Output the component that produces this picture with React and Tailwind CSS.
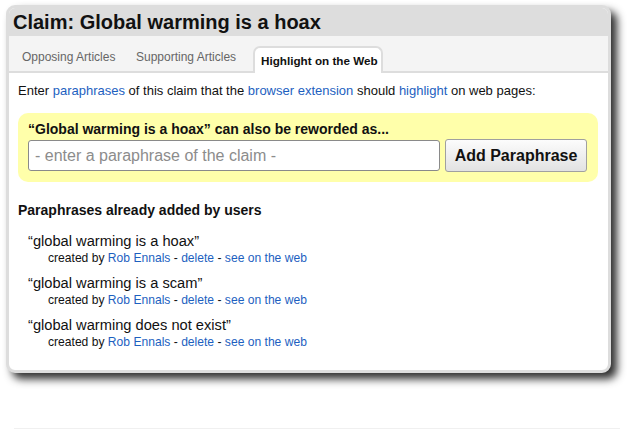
export default function App() {
  const link = "text-[#1d5fbf]";
  const items = [
    "“global warming is a hoax”",
    "“global warming is a scam”",
    "“global warming does not exist”",
  ];
  return (
    <div className="w-[632px] h-[434px] bg-white font-['Liberation_Sans',Arial,sans-serif] text-[#111] flex flex-col">
      <div className="pt-[5px] pl-[6px]">
        <div className="w-[605px] h-[368px] border-[3px] border-[#dddddd] rounded-[9px] bg-white shadow-[6px_6px_8px_rgba(0,0,0,0.82)] overflow-hidden flex flex-col">
          <div className="bg-[#dddddd] h-[28px] pl-[4px] text-[20px] font-bold leading-[28px] text-[#111]">
            Claim: Global warming is a hoax
          </div>
          <div className="bg-[#f4f4f4] h-[37px] border-b-2 border-[#dddddd] flex items-end">
            <div className="ml-[13px] w-[114px] mb-[7px] text-[12px] leading-[14px] text-[#666]">Opposing Articles</div>
            <div className="w-[117px] mb-[7px] text-[12px] leading-[14px] text-[#666]">Supporting Articles</div>
            <div className="-mb-[2px] w-[130px] h-[27px] bg-white border-2 border-b-0 border-[#dddddd] rounded-t-[7px] pl-[6px] pt-[6px] text-[11.7px] leading-[14px] font-bold text-[#111]">
              Highlight on the Web
            </div>
          </div>
          <div className="pl-[9px] pr-[10px] pt-[10px] flex flex-col">
            <p className="text-[13px] leading-[16px]">
              Enter <span className={link}>paraphrases</span> of this claim that the{" "}
              <span className={link}>browser extension</span> should{" "}
              <span className={link}>highlight</span> on web pages:
            </p>
            <div className="mt-[14px] w-[580px] rounded-[10px] bg-[#ffffaa] pl-[10px] pt-[8px] pb-[10px]">
              <div className="text-[14px] leading-[17px] font-bold">
                “Global warming is a hoax” can also be reworded as...
              </div>
              <div className="mt-[1px] flex items-center h-[33px]">
                <input
                  className="w-[412px] h-[31px] border border-[#8a8a8a] rounded-[3px] bg-white px-[6px] text-[16px] outline-none placeholder:text-[#8c8c8c]"
                  placeholder="- enter a paraphrase of the claim -"
                />
                <button className="ml-[5px] w-[142px] h-[33px] border border-[#a0a0a0] rounded-[3px] bg-gradient-to-b from-[#fcfcfc] to-[#e2e2e2] text-[16px] font-bold text-[#111]">
                  Add Paraphrase
                </button>
              </div>
            </div>
            <div className="mt-[20px] text-[14px] leading-[17px] font-bold">
              Paraphrases already added by users
            </div>
            <div className="mt-[14px] flex flex-col gap-[10px]">
              {items.map((t) => (
                <div key={t} className="flex flex-col">
                  <div className="ml-[10px] text-[14.667px] leading-[17px]">{t}</div>
                  <div className="ml-[30px] pt-[1px] text-[12.1px] leading-[14px]">
                    created by <span className={link}>Rob Ennals</span> -{" "}
                    <span className={link}>delete</span> -{" "}
                    <span className={link}>see on the web</span>
                  </div>
                </div>
              ))}
            </div>
          </div>
        </div>
      </div>
      <div className="mt-[55px] ml-[14px] w-[606px] h-[1px] bg-[#f0f0f0]" />
    </div>
  );
}
